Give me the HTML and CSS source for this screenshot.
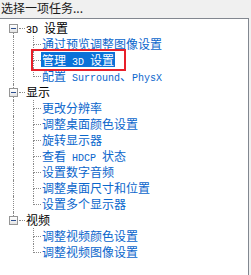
FILE: index.html
```html
<!DOCTYPE html>
<html>
<head>
<meta charset="utf-8">
<link rel="stylesheet" href="styles.css">
</head>
<body>
<div class="title">选择一项任务...</div>
<div class="panel">
  <ul class="tree">
    <li class="group">
      <div class="grow"><span class="exp"><span class="up none"></span><span class="box"><span class="minus"></span></span><span class="down"></span></span><span class="hconn"></span><span class="glabel"><span class="lat">3D </span>设置</span></div>
      <ul class="kids">
        <li class="kid"><span class="trunk"></span><span class="branch"><span class="bt"></span><span class="bb"></span></span><span class="klabel">通过预览调整图像设置</span></li>
        <li class="kid"><span class="trunk"></span><span class="branch"><span class="bt"></span><span class="bb"></span></span><span class="klabel sel">管理<span class="lat"> 3D </span>设置</span></li>
        <li class="kid last"><span class="trunk"></span><span class="branch"><span class="bt"></span><span class="bb"></span></span><span class="klabel">配置<span class="lat"> Surround</span>、<span class="lat">PhysX</span></span></li>
      </ul>
    </li>
    <li class="group">
      <div class="grow"><span class="exp"><span class="up"></span><span class="box"><span class="minus"></span></span><span class="down"></span></span><span class="hconn"></span><span class="glabel">显示</span></div>
      <ul class="kids">
        <li class="kid"><span class="trunk"></span><span class="branch"><span class="bt"></span><span class="bb"></span></span><span class="klabel">更改分辨率</span></li>
        <li class="kid"><span class="trunk"></span><span class="branch"><span class="bt"></span><span class="bb"></span></span><span class="klabel">调整桌面颜色设置</span></li>
        <li class="kid"><span class="trunk"></span><span class="branch"><span class="bt"></span><span class="bb"></span></span><span class="klabel">旋转显示器</span></li>
        <li class="kid"><span class="trunk"></span><span class="branch"><span class="bt"></span><span class="bb"></span></span><span class="klabel">查看<span class="lat"> HDCP </span>状态</span></li>
        <li class="kid"><span class="trunk"></span><span class="branch"><span class="bt"></span><span class="bb"></span></span><span class="klabel">设置数字音频</span></li>
        <li class="kid"><span class="trunk"></span><span class="branch"><span class="bt"></span><span class="bb"></span></span><span class="klabel">调整桌面尺寸和位置</span></li>
        <li class="kid last"><span class="trunk"></span><span class="branch"><span class="bt"></span><span class="bb"></span></span><span class="klabel">设置多个显示器</span></li>
      </ul>
    </li>
    <li class="group lastgroup">
      <div class="grow"><span class="exp"><span class="up"></span><span class="box"><span class="minus"></span></span><span class="down none"></span></span><span class="hconn"></span><span class="glabel">视频</span></div>
      <ul class="kids">
        <li class="kid"><span class="trunk"></span><span class="branch"><span class="bt"></span><span class="bb"></span></span><span class="klabel">调整视频颜色设置</span></li>
        <li class="kid last"><span class="trunk"></span><span class="branch"><span class="bt"></span><span class="bb"></span></span><span class="klabel">调整视频图像设置</span></li>
      </ul>
    </li>
  </ul>
</div>
<div class="annot"></div>
</body>
</html>
```
FILE: styles.css
```css
html, body {
  margin: 0;
  padding: 0;
  height: 100%;
  background: #f0f0f0;
  font-family: "Noto Sans CJK SC", "Noto Sans", sans-serif;
  font-size: 12px;
  overflow: hidden;
}
body {
  display: flex;
  flex-direction: column;
}
.title {
  flex: none;
  height: 18px;
  line-height: 15px;
  padding-left: 1px;
  color: #1a1a1a;
}
.panel {
  flex: 1;
  min-height: 0;
  overflow: hidden;
  box-sizing: border-box;
  width: 249px;
  background: #fff;
  border-top: 1px solid #828790;
  border-right: 1px solid #828790;
  padding-top: 1px;
}
.tree, .kids {
  list-style: none;
  margin: 0;
  padding: 0;
}
.grow {
  display: flex;
  height: 16px;
  padding-left: 9px;
}
.exp {
  display: flex;
  flex-direction: column;
  width: 9px;
}
.up {
  height: 4px;
  margin-left: 4px;
  border-left: 1px dotted #8a8a8a;
}
.down {
  height: 3px;
  margin-left: 4px;
  border-left: 1px dotted #8a8a8a;
}
.up.none, .down.none {
  border-left-color: transparent;
}
.box {
  box-sizing: border-box;
  width: 9px;
  height: 9px;
  border: 1px solid #959595;
  background: linear-gradient(#ffffff, #e4e4e4);
  display: flex;
  align-items: center;
  justify-content: center;
}
.minus {
  width: 5px;
  height: 1px;
  background: #2c4f8e;
}
.hconn {
  align-self: flex-start;
  width: 6px;
  height: 8px;
  margin-left: 1px;
  border-bottom: 1px dotted #8a8a8a;
}
.glabel {
  margin-left: 1px;
  line-height: 16px;
  color: #000;
}
.lat {
  font-family: "Liberation Mono", monospace;
  font-size: 10px;
  white-space: pre;
}
.kid {
  display: flex;
  height: 16px;
}
.trunk {
  box-sizing: border-box;
  width: 20px;
  margin-left: 13px;
  border-left: 1px dotted #8a8a8a;
}
.lastgroup .trunk {
  border-left-color: transparent;
}
.branch {
  display: flex;
  flex-direction: column;
  width: 8px;
}
.bt {
  height: 8px;
  width: 7px;
  border-left: 1px dotted #8a8a8a;
  border-bottom: 1px dotted #8a8a8a;
}
.bb {
  flex: 1;
  border-left: 1px dotted #8a8a8a;
}
.kid.last .bb {
  border-left-color: transparent;
}
.klabel {
  height: 15px;
  line-height: 15px;
  padding: 0 1px;
  color: #0a66cc;
  white-space: nowrap;
}
.klabel.sel {
  background: #0a72d8;
  color: #fff;
}
.annot {
  position: absolute;
  left: 31px;
  top: 49px;
  width: 95px;
  height: 22px;
  box-sizing: border-box;
  border: 2px solid #e8202a;
}
```
